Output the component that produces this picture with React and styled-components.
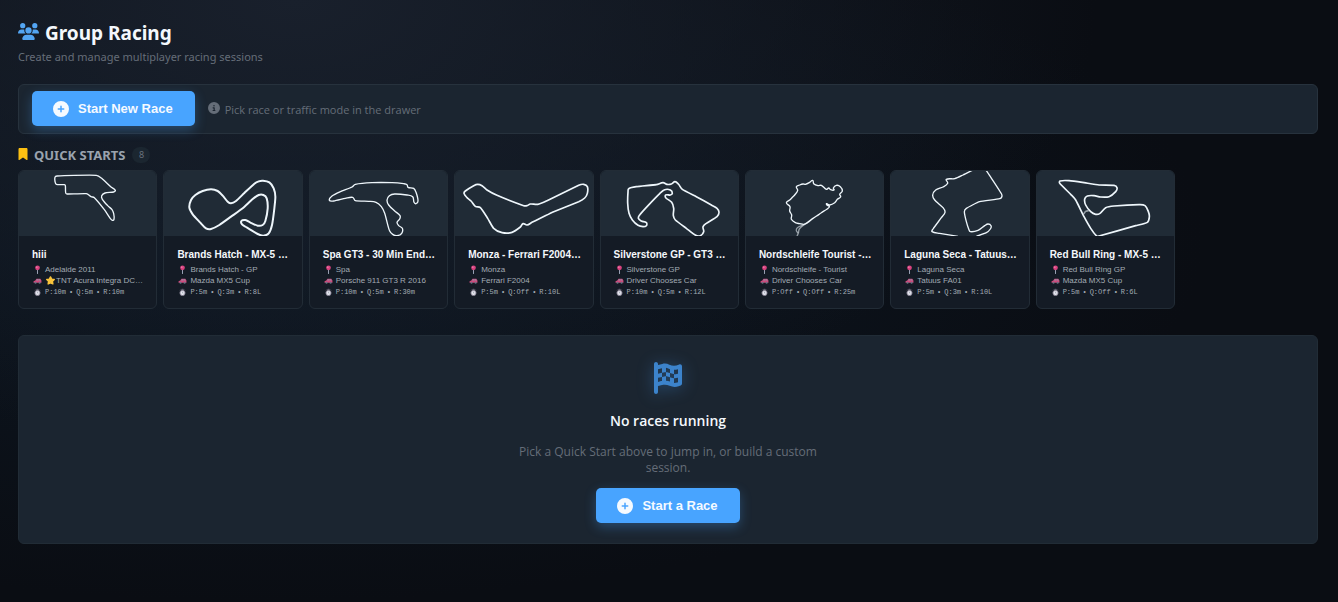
import React from "react";
import styled, { createGlobalStyle } from "styled-components";
import {
  FaUsers,
  FaCirclePlus,
  FaCircleInfo,
  FaBookmark,
  FaFlagCheckered,
} from "react-icons/fa6";

const uiFont = '"Noto Sans", "Open Sans", sans-serif';
const copyFont = '"Open Sans", "Noto Sans", sans-serif';
const plainFont = '"Liberation Sans", Arial, sans-serif';
const monoFont = '"Liberation Mono", monospace';

const GlobalStyle = createGlobalStyle`
  *, *::before, *::after { box-sizing: border-box; }
  html { min-height: 100%; background: #0a0d14; }
  body {
    margin: 0;
    min-height: 100vh;
    color: #f4f8fc;
    font-family: ${uiFont};
    background:
      radial-gradient(ellipse 60% 75% at 22% 0%, #19202c 0%, rgba(24, 31, 43, 0) 100%),
      radial-gradient(ellipse 70% 60% at 20% 40%, #0d1722 0%, rgba(13, 23, 34, 0) 100%),
      #0a0d13;
  }
`;

const Page = styled.main`
  min-height: 100vh;
  padding: 20px 20px 20px 18px;
`;

const PageTitle = styled.h1`
  display: flex;
  gap: 6px;
  margin: 0;
  font-size: 19px;
  line-height: 26px;
  font-weight: 700;

  svg {
    width: 21px;
    height: 17px;
    margin-top: 3px;
  }
`;

const Subtitle = styled.p`
  margin: 3px 0 0;
  color: #656d78;
  font-size: 11px;
  line-height: 16px;
`;

const Panel = styled.section`
  border: 1px solid #27323d;
  border-radius: 6px;
  background: #1b2530;
`;

const Toolbar = styled(Panel)`
  display: flex;
  align-items: center;
  gap: 13px;
  margin-top: 19px;
  padding: 6px 13px 7px;
`;

const PrimaryButton = styled.button`
  display: inline-flex;
  align-items: center;
  gap: 9px;
  height: 35px;
  padding: 0 22px 0 21px;
  border: 0;
  border-radius: 5px;
  background: #48a4ff;
  box-shadow: 0 4px 12px rgba(72, 164, 255, 0.3);
  color: #f5faff;
  font: 700 13px/16px ${plainFont};
  cursor: pointer;

  svg {
    width: 16px;
    height: 16px;
  }
`;

const Hint = styled.p`
  display: flex;
  gap: 5px;
  margin: 0;
  padding-top: 3px;
  color: #656d78;
  font-family: ${copyFont};
  font-size: 11px;
  line-height: 16px;

  svg {
    width: 12px;
    height: 12px;
  }
`;

const SectionHeading = styled.div`
  display: flex;
  align-items: center;
  gap: 7px;
  height: 16px;
  margin-top: 13px;
`;

const SectionTitle = styled.h2`
  display: flex;
  gap: 6px;
  margin: 0;
  color: #9aa3ae;
  font-size: 13px;
  line-height: 18px;
  font-weight: 700;
  text-transform: uppercase;

  svg {
    width: 10px;
    height: 12px;
    margin-top: 2px;
    color: #fcc012;
  }
`;

const CountBadge = styled.span`
  min-width: 18px;
  border-radius: 8px;
  background: #1b2630;
  color: #68717c;
  font-size: 9px;
  line-height: 16px;
  text-align: center;
`;

const CardGrid = styled.ul`
  display: grid;
  grid-template-columns: repeat(8, minmax(0, 1fr));
  gap: 6px;
  width: 89%;
  margin: 7px 0 0;
  padding: 0;
  list-style: none;
`;

const Card = styled.button`
  display: block;
  width: 100%;
  padding: 0;
  overflow: hidden;
  border: 1px solid #222c36;
  border-radius: 6px;
  background: #141b25;
  color: #f4f8fc;
  font-family: ${plainFont};
  text-align: left;
  white-space: nowrap;
  cursor: pointer;
`;

const TrackPreview = styled.svg`
  display: block;
  width: 100%;
  height: 65px;
  background: #202b36;
  fill: none;
  stroke: #eef6fb;
  stroke-linejoin: round;
`;

const CardBody = styled.span`
  display: block;
  padding: 12px 12px 10px 13px;
`;

const CardTitle = styled.span`
  display: block;
  margin-bottom: 2px;
  font-size: 10px;
  line-height: 14px;
  font-weight: 700;
`;

const CardLine = styled.span`
  display: flex;
  align-items: center;
  color: #a3abb4;
  font-size: 8px;
  line-height: 11px;

  svg {
    flex: none;
    width: 9px;
    height: 9px;
    margin: 0 3px 0 1px;
  }
`;

const StarBadge = styled.span`
  display: flex;

  svg {
    margin: 0 1px;
  }
`;

const TimesLine = styled(CardLine)`
  color: #a3abb4;
  font-family: ${monoFont};
  font-size: 7px;
  line-height: 12px;
`;

const Times = styled.span`
  display: flex;
  gap: 3px;
`;

const EmptyState = styled(Panel)`
  display: flex;
  flex-direction: column;
  align-items: center;
  margin-top: 26px;
  padding: 26px 20px 20px;
  border-color: #212c36;
`;

const FlagIcon = styled(FaFlagCheckered)`
  width: 28px;
  height: 32px;
  color: #3c83cb;
  filter: drop-shadow(0 2px 8px rgba(72, 164, 255, 0.35));
`;

const EmptyTitle = styled.h3`
  margin: 17px 0 0;
  font-family: ${copyFont};
  font-size: 14px;
  line-height: 20px;
  font-weight: 600;
`;

const EmptyText = styled.p`
  max-width: 300px;
  margin: 13px 0 12px;
  color: #656d78;
  font-family: ${copyFont};
  font-size: 12px;
  line-height: 16px;
  text-align: center;
`;

function smoothPath(points, closed) {
  const n = points.length;
  const at = (i) =>
    closed ? points[(i + n) % n] : points[Math.max(0, Math.min(n - 1, i))];
  let d = `M${points[0].join(" ")}`;
  const last = closed ? n : n - 1;
  for (let i = 0; i < last; i += 1) {
    const [a, b, c, e] = [at(i - 1), at(i), at(i + 1), at(i + 2)];
    const full = Math.hypot(c[0] - b[0], c[1] - b[1]);
    const span = Math.min(full / 3, 7);
    const before = Math.hypot(c[0] - a[0], c[1] - a[1]) || 1;
    const after = Math.hypot(e[0] - b[0], e[1] - b[1]) || 1;
    const c1 = [b[0] + ((c[0] - a[0]) / before) * span, b[1] + ((c[1] - a[1]) / before) * span];
    const c2 = [c[0] - ((e[0] - b[0]) / after) * span, c[1] - ((e[1] - b[1]) / after) * span];
    d += `C${[...c1, ...c2, ...c].map((v) => v.toFixed(1)).join(" ")}`;
  }
  return closed ? `${d}Z` : d;
}

const pts = (text) => text.split(" ").map((pair) => pair.split(",").map(Number));

const PinIcon = () => (
  <svg viewBox="0 0 16 16" aria-hidden="true">
    <path d="M8 8v7" stroke="#97a2b4" strokeWidth="1.8" strokeLinecap="round" />
    <circle cx="8" cy="5" r="4.2" fill="#d9427f" />
    <circle cx="6.8" cy="3.8" r="1.2" fill="#f59abf" />
  </svg>
);

const CarIcon = () => (
  <svg viewBox="0 0 16 16" aria-hidden="true">
    <path d="M1 12V9.3L4 8l2.2-3.3H13L15 8v4z" fill="#cf4a7c" />
    <path d="M5.6 8 7 5.8h2V8zM10 8V5.8h2.4l1 2.2z" fill="#8d91a8" />
    <circle cx="4.5" cy="12" r="1.9" fill="#6d7386" />
    <circle cx="11.8" cy="12" r="1.9" fill="#6d7386" />
  </svg>
);

const ClockIcon = () => (
  <svg viewBox="0 0 16 16" aria-hidden="true">
    <path d="M6.5 2h3v2h-3zM3 4l1.4-1.2M13 4l-1.4-1.2" stroke="#6f6a7a" fill="#6f6a7a" />
    <circle cx="8" cy="8.8" r="4.6" fill="#e4e6ee" stroke="#837e90" strokeWidth="1.6" />
    <path d="M8 6.500v2.500h1.500" stroke="#8d90a0" fill="none" />
  </svg>
);

const StarIcon = () => (
  <svg viewBox="0 0 16 16" aria-hidden="true">
    <path
      d="m8 1.500 2.200 4 4.500.7-3.200 3.300.7 4.600L8 12.100l-4.200 2 .7-4.600L1.300 6.200l4.500-.7z"
      fill="#f8c33c"
      stroke="#f8c33c"
      strokeWidth="2.400"
      strokeLinejoin="round"
    />
  </svg>
);

const races = [
  {
    title: "hiii",
    track: "Adelaide 2011",
    car: "TNT Acura Integra DC…",
    starred: true,
    times: ["P:10m", "Q:5m", "R:10m"],
    stroke: 4,
    loop: "122,36 128,33 180,31 246,31 262,40 290,66 303,76 298,81 272,84 262,92 264,103 280,122 293,134 298,146 299,163 294,166 288,161 270,134 240,98 230,95 216,86 158,87 154,84 153,62 150,59 126,58 122,50",
  },
  {
    title: "Brands Hatch - MX-5 …",
    track: "Brands Hatch - GP",
    car: "Mazda MX5 Cup",
    times: ["P:5m", "Q:3m", "R:8L"],
    stroke: 6,
    loop: "90,128 95,105 108,90 130,78 155,73 175,78 190,92 205,110 215,115 230,108 255,84 285,56 298,49 310,47 330,52 343,70 348,95 345,130 338,180 328,205 312,212 295,207 260,186 248,178 246,168 258,165 272,172 295,182 310,180 318,168 325,130 322,100 312,90 298,90 280,102 250,130 215,155 180,180 155,192 140,190 122,172 100,148",
  },
  {
    title: "Spa GT3 - 30 Min End…",
    track: "Spa",
    car: "Porsche 911 GT3 R 2016",
    times: ["P:10m", "Q:5m", "R:30m"],
    stroke: 4,
    loop: "72,106 80,93 105,80 140,66 150,58 200,53 260,53 295,56 305,59 308,67 325,70 332,82 338,108 332,116 326,112 322,95 305,90 268,87 252,92 245,105 250,120 268,138 284,152 283,162 275,172 280,182 291,190 289,205 275,212 262,208 253,198 246,175 238,145 228,125 212,112 190,109 150,107 142,97 120,100 85,108",
  },
  {
    title: "Monza - Ferrari F2004…",
    track: "Monza",
    car: "Ferrari F2004",
    times: ["P:5m", "Q:Off", "R:10L"],
    stroke: 5,
    loop: "41,85 45,78 70,62 82,58 95,62 110,75 140,91 220,122 230,122 240,117 262,118 290,107 385,61 400,58 411,65 411,85 403,99 385,110 310,140 245,172 230,180 218,176 210,186 185,202 155,203 130,190 112,160 90,128 75,124 62,108 50,98",
  },
  {
    title: "Silverstone GP - GT3 …",
    track: "Silverstone GP",
    car: "Driver Chooses Car",
    times: ["P:10m", "Q:5m", "R:12L"],
    stroke: 5,
    loop: "95,80 97,71 120,65 180,59 200,53 212,58 225,57 236,50 246,57 258,73 300,95 345,120 362,130 368,142 362,155 330,175 320,185 322,200 312,212 298,211 270,190 237,165 231,152 232,130 226,112 208,98 208,90 222,90 228,85 222,75 205,74 190,86 155,122 130,150 126,160 135,168 150,173 150,182 140,185 125,181 108,165 98,145 94,115",
  },
  {
    title: "Nordschleife Tourist -…",
    track: "Nordschleife - Tourist",
    car: "Driver Chooses Car",
    times: ["P:Off", "Q:Off", "R:25m"],
    stroke: 4,
    loop: "165,65 175,60 185,57 192,58 205,52 214,46 217,56 230,62 240,61 255,73 262,69 268,74 278,75 276,69 285,61 297,65 303,78 295,88 298,95 288,103 280,113 265,120 255,117 264,126 240,143 232,149 215,160 198,173 188,178 175,176 162,173 150,163 151,150 145,138 146,125 135,113 145,105 152,98 160,90 169,76",
    faint: ["200,172 185,180 168,188 165,197 170,205 167,213", "190,178 174,192 171,205"],
  },
  {
    title: "Laguna Seca - Tatuus…",
    track: "Laguna Seca",
    car: "Tatuus FA01",
    times: ["P:5m", "Q:3m", "R:10L"],
    stroke: 4,
    open: [
      "298,14 310,32 340,78 347,92 340,101 280,110 240,130 234,140 240,170 247,192 252,200 275,196 295,182 305,177 314,182 312,192 300,203 270,214",
      "262,14 230,30 205,41 180,43 184,55 170,66 148,75 139,90 145,105 170,128 176,142 165,158 140,192 137,200 160,205 215,214",
    ],
  },
  {
    title: "Red Bull Ring - MX-5 …",
    track: "Red Bull Ring GP",
    car: "Mazda MX5 Cup",
    times: ["P:5m", "Q:Off", "R:6L"],
    stroke: 5,
    loop: "82,55 83,48 110,47 150,52 200,60 245,61 254,68 250,80 230,95 205,96 185,92 165,93 157,102 160,120 175,140 190,148 203,145 220,128 245,123 320,119 338,122 348,140 351,155 345,172 310,182 200,213 193,213 175,190 155,155 130,105 115,88",
    faint: ["154,147 160,139 169,137"],
  },
];

function RaceCard({ race }) {
  return (
    <Card type="button">
      <TrackPreview viewBox="14 18 412 195" strokeWidth={race.stroke} aria-hidden="true">
        {race.loop && <path d={smoothPath(pts(race.loop), true)} />}
        {(race.open || []).map((line) => (
          <path key={line} d={smoothPath(pts(line), false)} />
        ))}
        {(race.faint || []).map((line) => (
          <path key={line} d={smoothPath(pts(line), false)} opacity="0.55" />
        ))}
      </TrackPreview>
      <CardBody>
        <CardTitle>{race.title}</CardTitle>
        <CardLine>
          <PinIcon />
          {race.track}
        </CardLine>
        <CardLine>
          <CarIcon />
          {race.starred && (
            <StarBadge>
              <StarIcon />
            </StarBadge>
          )}
          {race.car}
        </CardLine>
        <TimesLine>
          <ClockIcon />
          <Times>
            <span>{race.times[0]}</span>
            <span>•</span>
            <span>{race.times[1]}</span>
            <span>•</span>
            <span>{race.times[2]}</span>
          </Times>
        </TimesLine>
      </CardBody>
    </Card>
  );
}

export default function App() {
  return (
    <>
      <GlobalStyle />
      <Page>
        <header>
          <PageTitle>
            <FaUsers color="#53a5f2" aria-hidden="true" />
            Group Racing
          </PageTitle>
          <Subtitle>Create and manage multiplayer racing sessions</Subtitle>
        </header>

        <Toolbar>
          <PrimaryButton type="button">
            <FaCirclePlus aria-hidden="true" />
            Start New Race
          </PrimaryButton>
          <Hint>
            <FaCircleInfo aria-hidden="true" />
            Pick race or traffic mode in the drawer
          </Hint>
        </Toolbar>

        <section>
          <SectionHeading>
            <SectionTitle>
              <FaBookmark aria-hidden="true" />
              Quick Starts
            </SectionTitle>
            <CountBadge>8</CountBadge>
          </SectionHeading>
          <CardGrid>
            {races.map((race) => (
              <li key={race.title}>
                <RaceCard race={race} />
              </li>
            ))}
          </CardGrid>
        </section>

        <EmptyState>
          <FlagIcon aria-hidden="true" />
          <EmptyTitle>No races running</EmptyTitle>
          <EmptyText>
            Pick a Quick Start above to jump in, or build a custom session.
          </EmptyText>
          <PrimaryButton type="button">
            <FaCirclePlus aria-hidden="true" />
            Start a Race
          </PrimaryButton>
        </EmptyState>
      </Page>
    </>
  );
}
